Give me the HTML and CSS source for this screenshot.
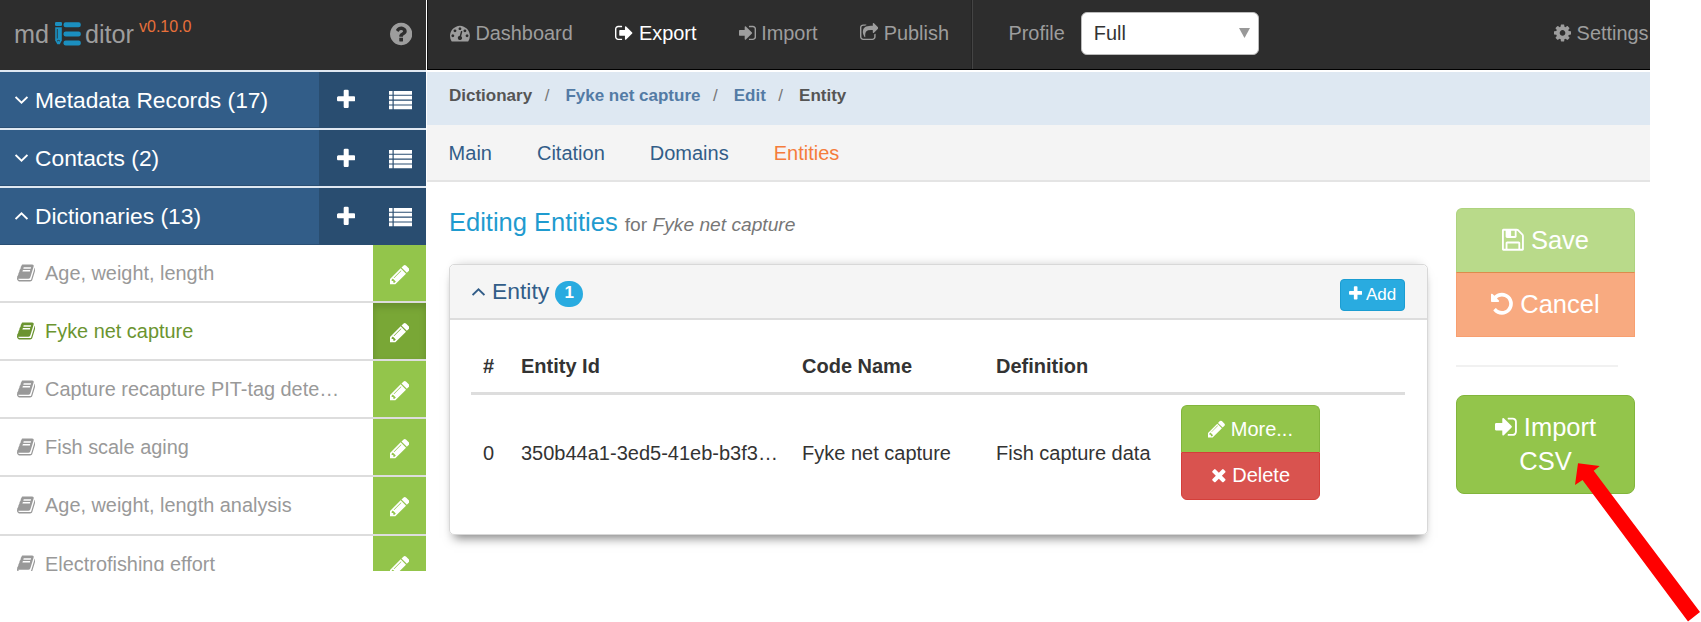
FILE: index.html
```html
<!DOCTYPE html>
<html lang="en">
<head>
<meta charset="utf-8">
<title>mdEditor</title>
<link rel="stylesheet" href="styles.css">
</head>
<body>
<svg class="sprite" aria-hidden="true">
  <path id="pencil" d="M491 1536l91-91-235-235-91 91v107h128v128h107zm523-928q0-22-22-22-10 0-17 7l-542 542q-7 7-7 17 0 22 22 22 10 0 17-7l542-542q7-7 7-17zm-54-192l416 416-832 832h-416v-416zm683 96q0 53-37 90l-166 166-416-416 166-165q36-38 90-38 53 0 91 38l235 234q37 39 37 91z"/>
  <path id="plus" d="M1600 736v192q0 40-28 68t-68 28h-416v416q0 40-28 68t-68 28h-192q-40 0-68-28t-28-68v-416h-416q-40 0-68-28t-28-68v-192q0-40 28-68t68-28h416v-416q0-40 28-68t68-28h192q40 0 68 28t28 68v416h416q40 0 68 28t28 68z"/>
  <path id="times" d="M1490 1322q0 40-28 68l-136 136q-28 28-68 28t-68-28l-294-294-294 294q-28 28-68 28t-68-28l-136-136q-28-28-28-68t28-68l294-294-294-294q-28-28-28-68t28-68l136-136q28-28 68-28t68 28l294 294 294-294q28-28 68-28t68 28l136 136q28 28 28 68t-28 68l-294 294 294 294q28 28 28 68z"/>
  <path id="cog" d="M1152 896q0-106-75-181t-181-75-181 75-75 181 75 181 181 75 181-75 75-181zm512-109v222q0 12-8 23t-20 13l-185 28q-19 54-39 91 35 50 107 138 10 12 10 25t-9 23q-27 37-99 108t-94 71q-12 0-26-9l-138-108q-44 23-91 38-16 136-29 186-7 28-36 28h-222q-14 0-24.5-8.5t-11.5-21.5l-28-184q-49-16-90-37l-141 107q-10 9-25 9-14 0-25-11-126-114-165-168-7-10-7-23 0-12 8-23 15-21 51-66.500t54-70.500q-27-50-41-99l-183-27q-13-2-21-12.500t-8-23.500v-222q0-12 8-23t19-13l186-28q14-46 39-92-40-57-107-138-10-12-10-24 0-10 9-23 26-36 98.500-107.500t94.500-71.500q13 0 26 10l138 107q44-23 91-38 16-136 29-186 7-28 36-28h222q14 0 24.500 8.500t11.500 21.500l28 184q49 16 90 37l142-107q9-9 24-9 13 0 25 10 129 119 165 170 7 8 7 22 0 12-8 23-15 21-51 66.500t-54 70.500q26 50 41 98l183 28q13 2 21 12.500t8 23.500z"/>
  <path id="sign-out" d="M704 1440q0 4 1 20t.5 26.500-3 23.500-10 19.500-20.500 6.500h-320q-119 0-203.500-84.500t-84.500-203.500v-704q0-119 84.500-203.500t203.500-84.500h320q13 0 22.500 9.500t9.500 22.500q0 4 1 20t.5 26.500-3 23.500-10 19.500-20.500 6.500h-320q-66 0-113 47t-47 113v704q0 66 47 113t113 47h312l11.500 1 11.500 3 8 5.500 7 9 2 13.500zm928-544q0 26-19 45l-544 544q-19 19-45 19t-45-19-19-45v-288h-448q-26 0-45-19t-19-45v-384q0-26 19-45t45-19h448v-288q0-26 19-45t45-19 45 19l544 544q19 19 19 45z"/>
  <path id="sign-in" d="M1312 896q0 26-19 45l-544 544q-19 19-45 19t-45-19-19-45v-288h-448q-26 0-45-19t-19-45v-384q0-26 19-45t45-19h448v-288q0-26 19-45t45-19 45 19l544 544q19 19 19 45zm352-352v704q0 119-84.500 203.500t-203.500 84.500h-320q-13 0-22.500-9.500t-9.500-22.500q0-4-1-20t-.5-26.500 3-23.500 10-19.500 20.500-6.500h320q66 0 113-47t47-113v-704q0-66-47-113t-113-47h-312l-11.500-1-11.500-3-8-5.500-7-9-2-13.500q0-4-1-20t-.5-26.500 3-23.500 10-19.500 20.500-6.500h320q119 0 203.500 84.500t84.500 203.500z"/>
  <path id="share" d="M1472 989v259q0 119-84.500 203.500t-203.500 84.500h-832q-119 0-203.500-84.500t-84.500-203.500v-832q0-119 84.500-203.500t203.500-84.500h255q13 0 22.500 9.500t9.500 22.500q0 27-26 32-77 26-133 60-10 4-16 4h-112q-66 0-113 47t-47 113v832q0 66 47 113t113 47h832q66 0 113-47t47-113v-214q0-19 18-29 28-13 54-37 16-16 35-8 21 9 21 29zm237-496l-384 384q-18 19-45 19-12 0-25-5-39-17-39-59v-192h-160q-323 0-438 131-119 137-74 473 3 23-20 34-8 2-12 2-16 0-26-13-10-14-21-31t-39.500-68.500-49.500-99.500-38.500-114-17.500-122q0-49 3.500-91t14-90 28-88 47-81.500 68.500-74 94.500-61.500 124.500-48.500 159.500-30.500 196.500-11h160v-192q0-42 39-59 13-5 25-5 26 0 45 19l384 384q19 19 19 45t-19 45z"/>
  <path id="book" d="M1703 478q40 57 18 129l-275 906q-19 64-76.500 107.500t-122.500 43.500h-923q-77 0-148.500-53.500t-99.500-131.500q-24-67-2-127 0-4 3-27t4-37q1-8-3-21.500t-3-19.500q2-11 8-21t16.500-23.500 16.500-23.500q23-38 45-91.500t30-91.500q3-10 .5-30t-.5-28q3-11 17-28t17-23q21-36 42-92t25-90q1-9-2.500-32t.5-28q4-13 22-30.500t22-22.500q19-26 42.500-84.500t27.500-96.500q1-8-3-25.500t-2-26.500q2-8 9-18t18-23 17-21q8-12 16.500-30.500t15-35 16-36 19.500-32 26.500-23.500 36-11.500 47.500 5.500l-1 3q38-9 51-9h761q74 0 114 56t18 130l-274 906q-36 119-71.500 153.500t-128.500 34.500h-869q-27 0-38 15-11 16-1 43 24 70 144 70h923q29 0 56-15.500t35-41.500l300-987q7-22 5-57 38 15 59 43zm-1064 2q-4 13 2 22.500t20 9.500h608q13 0 25.500-9.500t16.500-22.500l21-64q4-13-2-22.500t-20-9.500h-608q-13 0-25.500 9.500t-16.500 22.500zm-83 256q-4 13 2 22.500t20 9.500h608q13 0 25.500-9.500t16.500-22.500l21-64q4-13-2-22.500t-20-9.500h-608q-13 0-25.500 9.500t-16.500 22.500z"/>
  <path id="undo" d="M1664 896q0 156-61 298t-164 245-245 164-298 61q-172 0-327-72.500t-264-204.500q-7-10-6.500-22.500t8.500-20.500l137-138q10-9 25-9 16 2 23 12 73 95 179 147t225 52q104 0 198.500-40.500t163.500-109.500 109.500-163.500 40.500-198.500-40.500-198.500-109.500-163.500-163.500-109.500-198.500-40.500q-98 0-188 35.500t-160 101.500l137 138q31 30 14 69-17 40-59 40h-448q-26 0-45-19t-19-45v-448q0-42 40-59 39-17 69 14l130 129q107-101 244.500-156.500t284.500-55.500q156 0 298 61t245 164 164 245 61 298z"/>
  <path id="floppy" d="M512 1536h768v-384h-768v384zm896 0h128v-896q0-14-10-38.500t-20-34.500l-281-281q-10-10-34-20t-39-10v416q0 40-28 68t-68 28h-576q-40 0-68-28t-28-68v-416h-128v1280h128v-416q0-40 28-68t68-28h832q40 0 68 28t28 68v416zm-384-928v-320q0-13-9.500-22.500t-22.500-9.500h-192q-13 0-22.500 9.500t-9.500 22.500v320q0 13 9.500 22.500t22.500 9.500h192q13 0 22.500-9.500t9.500-22.500zm640 32v928q0 40-28 68t-68 28h-1344q-40 0-68-28t-28-68v-1344q0-40 28-68t68-28h928q40 0 88 20t76 48l280 280q28 28 48 76t20 88z"/>
  <path id="question" d="M1024 1376v-192q0-14-9-23t-23-9h-192q-14 0-23 9t-9 23v192q0 14 9 23t23 9h192q14 0 23-9t9-23zm256-672q0-88-55.500-163t-138.500-116-170-41q-243 0-371 213-15 24 8 42l132 100q7 6 19 6 16 0 25-12 53-68 86-92 34-24 86-24 48 0 85.500 26t37.500 59q0 38-20 61t-68 45q-63 28-115.500 86.500t-52.500 125.500v36q0 14 9 23t23 9h192q14 0 23-9t9-23q0-19 21.500-49.500t54.500-49.500q32-18 49-28.500t46-35 44.500-48 28-60.500 12.500-81zm384 192q0 209-103 385.500t-279.500 279.500-385.500 103-385.500-103-279.500-279.500-103-385.500 103-385.500 279.500-279.500 385.500-103 385.500 103 279.500 279.500 103 385.500z"/>
  <path id="gauge" d="M384 1152q0-53-37.500-90.500t-90.500-37.500-90.500 37.500-37.500 90.500 37.500 90.500 90.500 37.500 90.500-37.500 37.500-90.500zm192-448q0-53-37.500-90.500t-90.500-37.500-90.500 37.500-37.500 90.500 37.500 90.500 90.500 37.500 90.500-37.500 37.500-90.500zm428 481l101-382q6-26-7.500-48.500t-38.500-29.500-48 6.500-30 39.500l-101 382q-60 5-107 43.500t-63 98.500q-20 77 20 146t117 89 146-20 89-117q16-60-6-117t-72-91zm660-33q0-53-37.500-90.500t-90.500-37.500-90.500 37.500-37.500 90.500 37.500 90.500 90.500 37.500 90.500-37.500 37.500-90.500zm-640-640q0-53-37.500-90.500t-90.500-37.500-90.500 37.500-37.500 90.500 37.500 90.500 90.500 37.500 90.500-37.500 37.500-90.500zm448 192q0-53-37.500-90.500t-90.500-37.500-90.500 37.500-37.500 90.500 37.500 90.500 90.500 37.500 90.500-37.500 37.500-90.500zm320 448q0 261-141 483-19 29-54 29h-1402q-35 0-54-29-141-221-141-483 0-182 71-348t191-286 286-191 348-71 348 71 286 191 191 286 71 348z"/>
  <path id="list" d="M0 224h270v288h-270zM360 224h1432v288h-1432zM0 597h270v288h-270zM360 597h1432v288h-1432zM0 971h270v288h-270zM360 971h1432v288h-1432zM0 1344h270v288h-270zM360 1344h1432v288h-1432z"/>
</svg>

<div class="app">
  <aside class="sidebar">
    <header class="brand">
      <span class="brand-text">md</span>
      <svg class="brand-mark" viewBox="0 0 26 24">
        <rect x="0" y="0" width="7" height="4" rx="1.200"/>
        <path d="M.2 5.200h6.600v13.300l-2 3.800h-2.500l-2.100-3.800z"/>
        <path class="brand-cut" d="M2.300 7v9.500M2 19q1.500-1.200 3 0"/>
        <rect x="8.500" y=".3" width="17.300" height="5" rx="2.200"/>
        <rect x="8.500" y="9.400" width="17.300" height="5" rx="2.200"/>
        <rect x="8.500" y="18.400" width="17.300" height="5" rx="2.200"/>
      </svg>
      <span class="brand-text">ditor</span>
      <span class="version">v0.10.0</span>
      <svg class="icon help" viewBox="128 0 1536 1792"><use href="#question"/></svg>
    </header>

    <div class="group">
      <div class="group-title"><svg class="chevron" viewBox="0 0 13 8"><path d="M.6 1l5.900 5.700L12.400 1"/></svg>Metadata Records (17)</div>
      <div class="group-actions"><svg class="icon" viewBox="192 0 1408 1792"><use href="#plus"/></svg><svg class="icon" viewBox="0 0 1792 1792"><use href="#list"/></svg></div>
    </div>
    <div class="group">
      <div class="group-title"><svg class="chevron" viewBox="0 0 13 8"><path d="M.6 1l5.900 5.700L12.400 1"/></svg>Contacts (2)</div>
      <div class="group-actions"><svg class="icon" viewBox="192 0 1408 1792"><use href="#plus"/></svg><svg class="icon" viewBox="0 0 1792 1792"><use href="#list"/></svg></div>
    </div>
    <div class="group group-open">
      <div class="group-title"><svg class="chevron" viewBox="0 0 13 8"><path d="M.6 7l5.900-5.700L12.400 7"/></svg>Dictionaries (13)</div>
      <div class="group-actions"><svg class="icon" viewBox="192 0 1408 1792"><use href="#plus"/></svg><svg class="icon" viewBox="0 0 1792 1792"><use href="#list"/></svg></div>
    </div>

    <ul class="records">
      <li class="record"><a class="record-name"><svg class="icon" viewBox="64 0 1664 1792"><use href="#book"/></svg>Age, weight, length</a><span class="edit"><svg class="icon" viewBox="128 0 1536 1792"><use href="#pencil"/></svg></span></li>
      <li class="record active"><a class="record-name"><svg class="icon" viewBox="64 0 1664 1792"><use href="#book"/></svg>Fyke net capture</a><span class="edit"><svg class="icon" viewBox="128 0 1536 1792"><use href="#pencil"/></svg></span></li>
      <li class="record"><a class="record-name"><svg class="icon" viewBox="64 0 1664 1792"><use href="#book"/></svg>Capture recapture PIT-tag dete…</a><span class="edit"><svg class="icon" viewBox="128 0 1536 1792"><use href="#pencil"/></svg></span></li>
      <li class="record"><a class="record-name"><svg class="icon" viewBox="64 0 1664 1792"><use href="#book"/></svg>Fish scale aging</a><span class="edit"><svg class="icon" viewBox="128 0 1536 1792"><use href="#pencil"/></svg></span></li>
      <li class="record"><a class="record-name"><svg class="icon" viewBox="64 0 1664 1792"><use href="#book"/></svg>Age, weight, length analysis</a><span class="edit"><svg class="icon" viewBox="128 0 1536 1792"><use href="#pencil"/></svg></span></li>
      <li class="record"><a class="record-name"><svg class="icon" viewBox="64 0 1664 1792"><use href="#book"/></svg>Electrofishing effort</a><span class="edit"><svg class="icon" viewBox="128 0 1536 1792"><use href="#pencil"/></svg></span></li>
    </ul>
  </aside>

  <main class="main">
    <nav class="topnav">
      <div class="links">
        <a><svg class="icon" viewBox="0 0 1792 1792"><use href="#gauge"/></svg> Dashboard</a>
        <a class="current"><svg class="icon" viewBox="64 0 1664 1792"><use href="#sign-out"/></svg> Export</a>
        <a><svg class="icon" viewBox="128 0 1536 1792"><use href="#sign-in"/></svg> Import</a>
        <a><svg class="icon" viewBox="64 0 1664 1792"><use href="#share"/></svg> Publish</a>
      </div>
      <div class="profile">
        <span>Profile</span>
        <div class="select"><span>Full</span><svg class="caret" viewBox="0 0 11 10"><path d="M0 0h11L5.500 10z"/></svg></div>
      </div>
      <a class="settings"><svg class="icon" viewBox="128 0 1536 1792"><use href="#cog"/></svg> Settings</a>
    </nav>

    <div class="crumbs">
      <span>Dictionary</span><i>/</i><a>Fyke net capture</a><i>/</i><a>Edit</a><i>/</i><span>Entity</span>
    </div>

    <div class="tabs"><a>Main</a><a>Citation</a><a>Domains</a><a class="selected">Entities</a></div>

    <div class="content">
      <section class="editor">
        <h1 class="title">Editing Entities <small>for <em>Fyke net capture</em></small></h1>
        <div class="panel">
          <div class="panel-head">
            <svg class="chevron" viewBox="0 0 13 8"><path d="M.6 7l5.900-5.700L12.400 7"/></svg>
            <span class="panel-name">Entity</span>
            <span class="badge">1</span>
            <button class="add"><svg class="icon" viewBox="192 0 1408 1792"><use href="#plus"/></svg> Add</button>
          </div>
          <div class="panel-body">
            <table class="entities">
              <colgroup><col class="c-num"><col class="c-id"><col class="c-code"><col class="c-def"><col></colgroup>
              <thead><tr><th class="num">#</th><th>Entity Id</th><th>Code Name</th><th>Definition</th><th></th></tr></thead>
              <tbody><tr>
                <td class="num">0</td><td>350b44a1-3ed5-41eb-b3f3…</td><td>Fyke net capture</td><td>Fish capture data</td>
                <td><div class="row-actions">
                  <button class="more"><svg class="icon" viewBox="128 0 1536 1792"><use href="#pencil"/></svg> More...</button>
                  <button class="delete"><svg class="icon" viewBox="192 0 1408 1792"><use href="#times"/></svg> Delete</button>
                </div></td>
              </tr></tbody>
            </table>
          </div>
        </div>
      </section>

      <aside class="controls">
        <button class="save"><svg class="icon" viewBox="128 0 1536 1792"><use href="#floppy"/></svg> Save</button>
        <button class="cancel"><svg class="icon" viewBox="128 0 1536 1792"><use href="#undo"/></svg> Cancel</button>
        <div class="rule"></div>
        <button class="import"><svg class="icon" viewBox="128 0 1536 1792"><use href="#sign-in"/></svg> Import<br>CSV</button>
      </aside>
    </div>
  </main>
</div>

<svg class="pointer" viewBox="0 0 127 160"><path d="M4 1.300L25.700 4l-6 4.800L126 150l-12 9.500L8.500 18 1 23z"/></svg>
</body>
</html>
```
FILE: styles.css
```css
* { box-sizing: border-box; }

body {
  margin: 0;
  width: 1701px;
  height: 622px;
  overflow: hidden;
  position: relative;
  background: #fff;
  color: #333;
  font: 20px/28px "Liberation Sans", Arial, sans-serif;
}

button { margin: 0; color: #fff; font-family: inherit; }
.sprite { display: none; }

.icon {
  height: 1em;
  width: auto;
  vertical-align: -0.143em;
  fill: currentColor;
}

.chevron {
  flex: none;
  width: 13px;
  height: 8px;
  fill: none;
  stroke: currentColor;
  stroke-width: 1.800;
}

.app {
  display: flex;
  width: 1650px;
  height: 571px;
  overflow: hidden;
}

/* Sidebar */
.sidebar {
  flex: none;
  width: 427px;
  border-right: 1px solid #fff;
}

.brand {
  display: flex;
  align-items: center;
  height: 70px;
  padding: 0 14px 3px 14px;
  background: #2d2d2d;
  color: #9d9d9d;
}
.brand-text { font-size: 25.200px; }
.brand-mark {
  width: 26px;
  height: 24px;
  margin: 0 4px 0 6px;
  fill: #1b8fbf;
}
.brand-cut { fill: none; stroke: #2d2d2d; stroke-width: .8; }
.version {
  margin: 0 0 13px 5px;
  color: #e8703a;
  font-size: 16px;
}
.help { margin-left: auto; font-size: 26px; }

.group {
  display: flex;
  height: 58.200px;
  border-top: 2px solid #dfe8f2;
  color: #fff;
}
.group-title {
  flex: 1;
  display: flex;
  align-items: center;
  gap: 7px;
  padding-left: 15px;
  background: #325d88;
  border-bottom: 1px solid #2a4f74;
  font-size: 22.800px;
}
.group-actions {
  display: flex;
  align-items: center;
  justify-content: space-between;
  width: 107px;
  padding: 0 14px 0 18px;
  background: #294d70;
  font-size: 23.400px;
}

.records { margin: 0; padding: 0; list-style: none; }
.record {
  display: flex;
  height: 58.200px;
  border-bottom: 2px solid #ddd;
  color: #999;
}
.record-name {
  flex: 1;
  display: flex;
  align-items: center;
  gap: 9.600px;
  padding-left: 17px;
  font-size: 19.900px;
}
.edit {
  display: flex;
  align-items: center;
  justify-content: center;
  width: 53px;
  padding-top: 3px;
  background: #93c54b;
  color: #fff;
  font-size: 23px;
}
.active { color: #6b9430; }
.active .edit { background: #79a736; box-shadow: inset 0 4px 7px rgba(0, 0, 0, .15); }

/* Main column */
.main { flex: 1; min-width: 0; }

.topnav {
  display: flex;
  height: 70px;
  padding-left: 22px;
  border-bottom: 1px solid #000;
  border-left: 1px solid #111;
  background: #2d2d2d;
  color: #9d9d9d;
  font-size: 19.900px;
}
.links {
  display: flex;
  gap: 42.200px;
  height: 69px;
  padding: 19px 22.500px 0 0;
  border-right: 1px solid #242424;
}
.current { color: #fff; }
.profile {
  display: flex;
  gap: 16px;
  padding: 12px 0 0 35px;
  border-left: 1px solid #444;
}
.profile > span { padding-top: 7px; }
.select {
  display: flex;
  justify-content: space-between;
  width: 178px;
  height: 43px;
  padding: 6px 8px 0 12px;
  border: 1px solid #bbb;
  border-radius: 6px;
  background: #fff;
  color: #333;
}
.caret { width: 11px; height: 10px; margin-top: 9px; fill: #999; }
.settings { margin: 19px 1.500px 0 auto; }

.crumbs {
  height: 55px;
  padding: 11px 0 0 22px;
  border-top: 2px solid #fff;
  background: #dee8f2;
  color: #555;
  font-size: 17px;
  font-weight: bold;
  line-height: 25px;
}
.crumbs a { color: #537ba5; }
.crumbs i { margin: 0 16px 0 12.500px; font-style: normal; font-weight: normal; color: #777; }

.tabs {
  display: flex;
  gap: 45px;
  height: 57px;
  padding: 14px 0 0 21.600px;
  border-bottom: 2px solid #e4e4e4;
  background: #f4f4f4;
  color: #325d88;
}
.selected { color: #f47c3c; }

.content { display: flex; padding-left: 22px; }
.editor { width: 979px; }

.title {
  margin: 0;
  height: 82px;
  padding-top: 24px;
  color: #1f9bcf;
  font-size: 25.500px;
  font-weight: normal;
  line-height: 32px;
}
.title small { color: #777; font-size: 19.200px; }

.panel {
  height: 271px;
  border: 1px solid #d8d8d8;
  border-radius: 5px;
  box-shadow: 0 8px 10px -5px rgba(0, 0, 0, .5), 0 -6px 10px -7px rgba(0, 0, 0, .2);
}
.panel-head {
  display: flex;
  align-items: center;
  height: 55px;
  padding: 0 22px 0 22px;
  border-bottom: 2px solid #ddd;
  border-radius: 5px 5px 0 0;
  background: #f5f5f5;
  color: #325d88;
}
.panel-name { margin: 0 6px 2px 7px; font-size: 22.900px; }
.badge {
  width: 28px;
  height: 26px;
  margin-top: 4px;
  border-radius: 14px;
  background: #29abe0;
  color: #fff;
  font-size: 17px;
  font-weight: bold;
  line-height: 24px;
  text-align: center;
}
.add {
  width: 65px;
  height: 32px;
  margin: 6px 0 0 auto;
  padding: 0;
  border: 1px solid #1b9dd2;
  border-radius: 4px;
  background: #29abe0;
  font-size: 17px;
}

.panel-body { padding: 0 22px 0 21px; }
.entities {
  width: 100%;
  table-layout: fixed;
  border-collapse: collapse;
}
.c-num { width: 35px; }
.c-id { width: 281px; }
.c-code { width: 194px; }
.c-def { width: 185px; }
.entities th, .entities td { padding: 0 0 0 15px; text-align: left; white-space: nowrap; }
.entities th { height: 73px; padding-top: 21px; border-bottom: 3px solid #ddd; }
.entities td { height: 118px; }
.entities .num { padding-left: 0; text-align: center; }

.row-actions { width: 139px; }
.row-actions button { display: block; width: 100%; padding: 0; font-size: 20px; }
.more {
  height: 47px;
  border: 1px solid #82b53c;
  border-bottom: 0;
  border-radius: 6px 6px 0 0;
  background: #93c54b;
}
.row-actions .delete {
  height: 48px;
  padding-bottom: 1px;
  border: 1px solid #d43f3a;
  border-radius: 0 0 6px 6px;
  background: #d9534f;
}

.controls { width: 179px; margin: 26px 0 0 28px; }
.controls button { display: block; width: 100%; padding: 0 0 2px; font-size: 25.500px; line-height: 34px; }
.save {
  height: 64px;
  border: 1px solid #aed37f;
  border-bottom: 0;
  border-radius: 6px 6px 0 0;
  background: #b9da8a;
}
.cancel {
  height: 65px;
  border: 1px solid #f89f70;
  border-top-color: #dc8c4c;
  background: #f8aa80;
}
.rule { width: 162px; height: 2px; margin: 28px 0; background: #f1f1f1; }
.import {
  height: 99px;
  border: 1px solid #82b53c;
  border-radius: 8px;
  background: #93c54b;
}

/* Callout arrow over the page */
.pointer {
  position: absolute;
  left: 1574px;
  top: 462px;
  width: 127px;
  height: 160px;
  fill: #f00;
}
```
